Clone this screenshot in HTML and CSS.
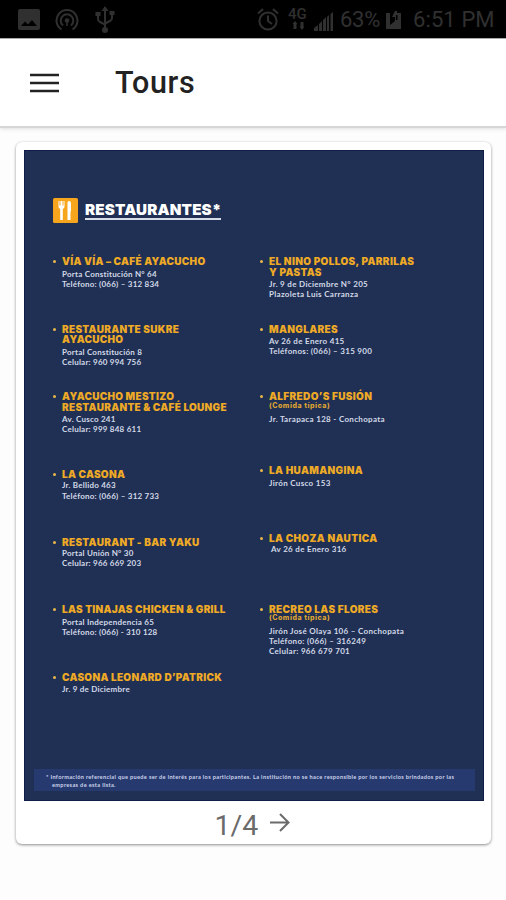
FILE: index.html
```html
<!DOCTYPE html>
<html lang="es">
<head>
<meta charset="utf-8">
<title>Tours</title>
<link rel="stylesheet" href="styles.css">
</head>
<body>
<div class="status">
  <svg class="s-img" width="22" height="22" viewBox="0 0 22 22"><path fill="currentColor" fill-rule="evenodd" d="M2 0h18a2 2 0 0 1 2 2v17a2 2 0 0 1-2 2H2a2 2 0 0 1-2-2V2a2 2 0 0 1 2-2zM3 17h16l-5-6-4 4.500-3-3z"/></svg>
  <svg class="s-cast" width="24" height="23" viewBox="0 0 24 23" fill="none" stroke="currentColor" stroke-width="2"><path d="M6.500 20.500a10.500 10.500 0 1 1 11 0M8 16.500a6.300 6.300 0 1 1 8 0"/><circle cx="12" cy="11.500" r="2.300" fill="currentColor" stroke="none"/><path stroke-width="1.500" d="M12 12v5"/></svg>
  <svg class="s-usb" width="20" height="28" viewBox="0 0 20 28" fill="none" stroke="currentColor" stroke-width="2"><path d="M10 4v20M3 9v4q0 2 2 3l5 2.500M17 8v4q0 2-2 3l-5 2.500"/><path fill="currentColor" stroke="none" d="M10 0l3.500 5h-7zM0.500 6h5v4h-5zM14.500 5h5v4h-5z"/><circle cx="10" cy="24" r="3" fill="currentColor" stroke="none"/></svg>
  <svg class="s-alarm" width="22" height="23" viewBox="0 0 22 23" fill="none" stroke="currentColor" stroke-width="2"><circle cx="11" cy="13" r="8.600"/><path d="M11 7.500V13l4 3M1 5.500L6 1M21 5.500L16 1"/></svg>
  <div class="s-net"><span>4G</span><svg width="13" height="9" viewBox="0 0 13 9" fill="currentColor"><path d="M3 0l2.500 3h-1v5h-3V3h-1zM8.500 1h3v4.500h1L10 9 7.500 5.500h1z"/></svg></div>
  <svg class="s-sig" width="20" height="19" viewBox="0 0 20 19" fill="currentColor"><path d="M0 19v-3l4-3v6zM5 19v-7l3-3v10zM9 19V8l3-3v14zM13 19V5l2-2v16zM16.500 19V2L19 0v19z"/></svg>
  <span class="s-pct">63%</span>
  <svg class="s-bat" width="15" height="18" viewBox="0 0 15 18"><path fill="currentColor" fill-rule="evenodd" d="M0 2h4v12l5-4V6H6l3-6h2v2h4v16H0zM10 4v5h1.500V4z"/></svg>
  <span class="s-time">6:51 PM</span>
</div>
<header class="bar">
  <svg width="29" height="20" viewBox="0 0 29 20"><path stroke="#222" stroke-width="2.600" d="M0 2h29M0 10h29M0 18h29"/></svg>
  <h1>Tours</h1>
</header>
<main class="card">
  <section class="poster">
    <div class="head">
      <svg width="25" height="25" viewBox="0 0 25 25"><rect width="25" height="25" rx="1.500" fill="#f6a51c"/><path fill="#fff" d="M5.500 3h1v4.500h1V3h2v4.500h1V3h1v5.500q0 1.500-1.700 2.500v11H7.200V11Q5.500 10 5.500 8.500zM14.500 22V4.500Q14.500 3 16 3q2 0 2 3v7l-.5 1v8z"/></svg>
      <h2>RESTAURANTES*</h2>
    </div>
    <div class="cols">
      <ul class="left">
        <li><h3>VÍA VÍA – CAFÉ AYACUCHO</h3><p>Porta Constitución N° 64<br>Teléfono: (066) – 312 834</p></li>
        <li><h3>RESTAURANTE SUKRE<br>AYACUCHO</h3><p>Portal Constitución 8<br>Celular: 960 994 756</p></li>
        <li class="tall"><h3>AYACUCHO MESTIZO<br>RESTAURANTE &amp; CAFÉ LOUNGE</h3><p>Av. Cusco 241<br>Celular: 999 848 611</p></li>
        <li class="tight"><h3>LA CASONA</h3><p>Jr. Bellido 463<br>Teléfono: (066) – 312 733</p></li>
        <li class="tight"><h3>RESTAURANT - BAR YAKU</h3><p>Portal Unión N° 30<br>Celular: 966 669 203</p></li>
        <li><h3>LAS TINAJAS CHICKEN &amp; GRILL</h3><p>Portal Independencia 65<br>Teléfono: (066) - 310 128</p></li>
        <li><h3>CASONA LEONARD D’PATRICK</h3><p>Jr. 9 de Diciembre</p></li>
      </ul>
      <ul class="right">
        <li><h3>EL NINO POLLOS, PARRILAS<br>Y PASTAS</h3><p>Jr. 9 de Diciembre N° 205<br>Plazoleta Luis Carranza</p></li>
        <li><h3>MANGLARES</h3><p>Av 26 de Enero 415<br>Teléfonos: (066) – 315 900</p></li>
        <li class="mid"><h3>ALFREDO’S FUSIÓN</h3><h4>(Comida típica)</h4><p>Jr. Tarapaca 128 - Conchopata</p></li>
        <li><h3>LA HUAMANGINA</h3><p>Jirón Cusco 153</p></li>
        <li class="late tight"><h3>LA CHOZA NAUTICA</h3><p class="in">Av 26 de Enero 316</p></li>
        <li><h3>RECREO LAS FLORES</h3><h4>(Comida típica)</h4><p>Jirón José Olaya 106 – Conchopata<br>Teléfono: (066) – 316249<br>Celular: 966 679 701</p></li>
      </ul>
    </div>
    <div class="note">* Información referencial que puede ser de interés para los participantes. La institución no se hace responsible por los servicios brindados por las<br><span>empresas de esta lista.</span></div>
  </section>
  <footer class="pager"><span>1/4</span><svg width="20" height="19" viewBox="0 0 20 19" fill="none" stroke="#6b6b6b" stroke-width="2"><path d="M0 9.500h18M10 1l8.500 8.500L10 18"/></svg></footer>
</main>
</body>
</html>
```

FILE: styles.css
```css
* { box-sizing: border-box; margin: 0; padding: 0; }
body { width: 506px; height: 900px; background: #fdfdfd; font-family: Roboto, sans-serif; overflow: hidden; }
svg { display: block; flex: none; }
.status { height: 38px; background: #000; color: #303030; display: flex; align-items: flex-start; padding-left: 18px; white-space: nowrap; }
.s-img { margin-top: 9px; }
.s-cast { margin: 9px 0 0 15px; }
.s-usb { margin: 6px 0 0 16px; }
.s-alarm { margin: 8px 0 0 142px; }
.s-net { margin: 8px 0 0 9px; width: 20px; font-size: 15px; font-weight: 500; line-height: 13px; }
.s-net svg { margin: 0 0 0 4px; }
.s-sig { margin: 12px 0 0 6px; }
.s-pct, .s-time { font-size: 22px; line-height: 26px; margin-top: 7px; }
.s-pct { margin-left: 6px; width: 42px; letter-spacing: -.3px; }
.s-bat { margin: 11px 0 0 4px; }
.s-time { margin-left: 12px; letter-spacing: .1px; }
.bar { height: 90px; background: #fff; border-top: 1px solid #aaa; border-bottom: 2px solid #d6d6d6; box-shadow: 0 1px 4px rgba(0,0,0,.12); display: flex; align-items: center; padding-left: 30px; }
.bar h1 { margin-left: 56px; font-size: 30.500px; font-weight: 500; color: #222; letter-spacing: .6px; line-height: 36px; }
.card { margin: 14px 15px 0 16px; height: 702px; background: #fff; border-radius: 6px; padding: 8px 8px 0; box-shadow: 0 1px 3px rgba(0,0,0,.45); }
.poster { width: 460px; height: 651px; background: #203054; border: 1px solid #101d48; display: flex; flex-direction: column; padding: 47px 8px 9px 9px; }
.head { display: flex; padding-left: 19px; height: 58px; }
.head h2 { align-self: flex-start; margin: 4px 0 0 7px; font: 900 15.200px/16px Inter, sans-serif; color: #fff; border-bottom: 2px solid #d7dce8; height: 18px; white-space: nowrap; letter-spacing: .15px; }
.cols { display: flex; padding-left: 28px; flex: 1; }
.left { width: 207px; }
ul { list-style: none; white-space: nowrap; }
li { height: 67.600px; position: relative; }
li::before { content: ""; position: absolute; left: -9px; top: 4px; width: 3px; height: 3px; border-radius: 50%; background: #e9b84a; }
li.tall { height: 78px; }
li.mid { height: 74px; }
li.late { height: 71px; }
h3 { font: 900 10px/10.500px Inter, sans-serif; color: #eeaa26; letter-spacing: .3px; }
.right h3 { letter-spacing: .36px; }
h4 { font: 800 7px/8px Inter, sans-serif; color: #dfa331; letter-spacing: .55px; }
p { margin-top: 2px; font: 700 8px/10.200px Lato, sans-serif; color: #d3d9e8; letter-spacing: .23px; }
.right p { letter-spacing: .32px; }
.tight p { margin-top: .8px; }
h4 + p { margin-top: 5px; line-height: 9.800px; }
.in { padding-left: 2px; }
.note { height: 22px; padding: 4px 0 0 12px; background: #273a70; color: #ccd4ea; font: 700 5.600px/8px Lato, sans-serif; white-space: nowrap; letter-spacing: .35px; }
.note span { padding-left: 6px; }
.pager { height: 43px; display: flex; justify-content: center; align-items: center; padding: 6px 2px 0 0; font-size: 28.500px; color: #6b6b6b; gap: 12px; }
.pager svg { margin-top: -7px; }
```
